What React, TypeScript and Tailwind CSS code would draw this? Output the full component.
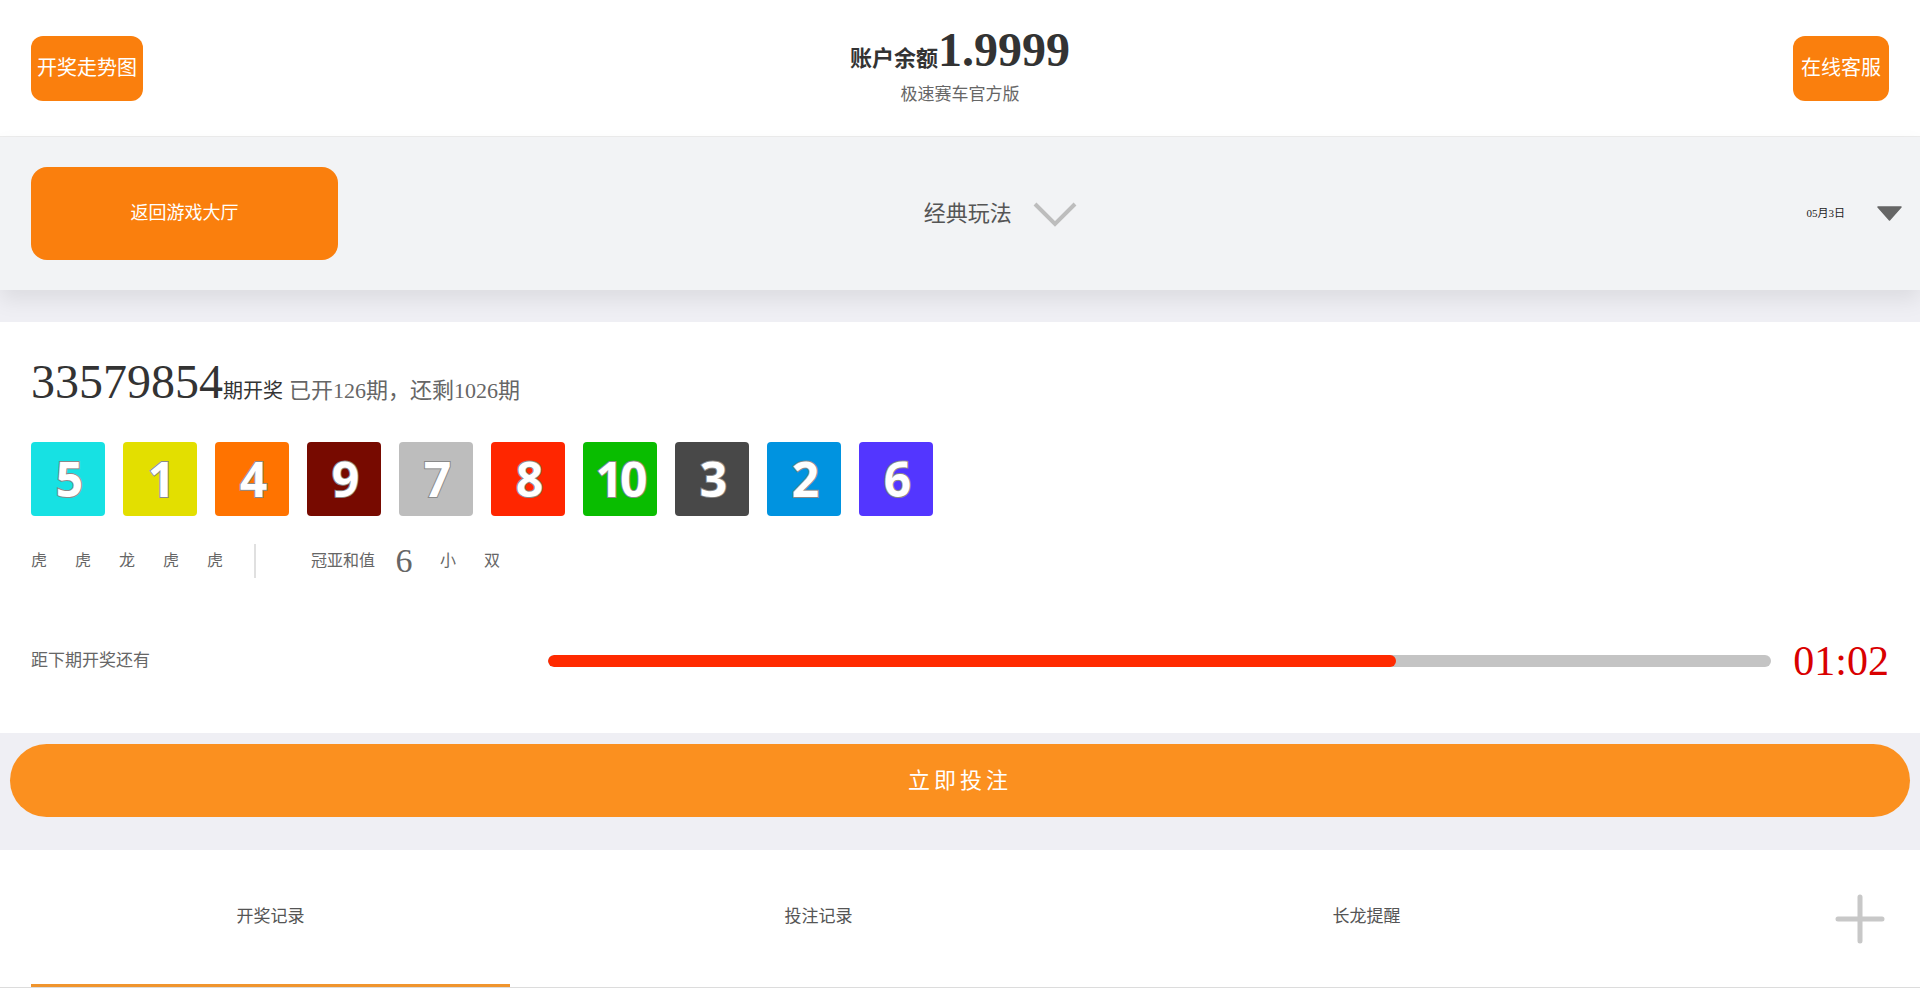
import clsx from 'clsx'

const balls = [
  { n: 5, bg: 'bg-[#17e1e3]' },
  { n: 1, bg: 'bg-[#e3df00]' },
  { n: 4, bg: 'bg-[#ff7300]' },
  { n: 9, bg: 'bg-[#770a00]' },
  { n: 7, bg: 'bg-[#bdbdbd]' },
  { n: 8, bg: 'bg-[#ff2600]' },
  { n: 10, bg: 'bg-[#09bd00]' },
  { n: 3, bg: 'bg-[#484848]' },
  { n: 2, bg: 'bg-[#0093e0]' },
  { n: 6, bg: 'bg-[#5336ff]' },
]

const dragonTiger = ['虎', '虎', '龙', '虎', '虎']
const tabs = ['开奖记录', '投注记录', '长龙提醒']

export default function App() {
  return (
    <div className="min-h-[993px] bg-[#efeff4] font-['Liberation_Serif','Noto_Sans_CJK_SC',serif]">
      {/* top bar */}
      <header className="h-[137px] bg-white border-b border-[#ececec] flex items-center justify-between px-[31px]">
        <div className="w-[112px]">
          <button className="w-[112px] h-[65px] rounded-[12px] bg-[#fa7f0d] text-white text-[20px]">
            开奖走势图
          </button>
        </div>
        <div className="flex flex-col items-center">
          <div className="h-[54px] text-[48px] leading-[54px] font-bold text-[#333] whitespace-nowrap">
            <span className="text-[22px] leading-none">账户余额</span>1.9999
          </div>
          <div className="h-[36px] text-[17px] leading-[36px] text-[#666]">极速赛车官方版</div>
        </div>
        <div className="w-[112px] flex justify-end">
          <button className="w-[96px] h-[65px] rounded-[12px] bg-[#fa7f0d] text-white text-[20px]">
            在线客服
          </button>
        </div>
      </header>

      {/* game switch */}
      <section className="relative z-10 h-[153px] bg-[#f2f3f5] shadow-[0_10px_20px_rgba(0,0,0,0.08)] flex items-center pl-[31px] pr-[18px]">
        <button className="w-[307px] h-[93px] rounded-[16px] bg-[#fa7f0d] text-white text-[18px]">
          返回游戏大厅
        </button>
        <div className="flex-1 flex items-center justify-center gap-[21px] pr-[144px]">
          <span className="text-[22px] text-[#555]">经典玩法</span>
          <svg width="44" height="26" viewBox="0 0 44 26" fill="none">
            <polyline points="2,3 22,23 42,3" stroke="#bdbdbd" strokeWidth="4" />
          </svg>
        </div>
        <div className="flex items-center gap-[32px]">
          <span className="text-[11px] text-[#222]">05月3日</span>
          <svg width="25" height="15" viewBox="0 0 25 15">
            <path d="M1 1 H24 L12.5 14 Z" fill="#666" stroke="#666" strokeLinejoin="round" strokeWidth="1.5" />
          </svg>
        </div>
      </section>

      {/* last draw */}
      <section className="mt-[32px] bg-white px-[31px] pt-[36px] pb-[52px]">
        <div className="h-[48px] leading-[48px] text-[#333] whitespace-nowrap">
          <span className="text-[48px]">33579854</span>
          <span className="text-[20px] leading-none">期开奖</span>
          <span className="ml-[6px] text-[22px] leading-none text-[#666]">已开126期，还剩1026期</span>
        </div>

        <div className="mt-[36px] flex gap-[18px]">
          {balls.map((b) => (
            <div
              key={b.n}
              className={clsx(
                'w-[74px] h-[74px] rounded-[4px] flex items-center justify-center text-white font-bold text-[48px] tracking-[-3px] leading-none',
                "font-['Open_Sans',sans-serif] [-webkit-text-stroke:2px_#8a8a8a] [paint-order:stroke_fill]",
                b.bg
              )}
            >
              {b.n}
            </div>
          ))}
        </div>

        <div className="mt-[28px] flex items-center h-[34px] text-[#666]">
          {dragonTiger.map((t, i) => (
            <span key={i} className="w-[44px] text-[16px]">
              {t}
            </span>
          ))}
          <span className="ml-[3px] w-[2px] h-[34px] bg-[#e0e0e0]" />
          <span className="ml-[55px] text-[16px]">冠亚和值</span>
          <span className="ml-[7px] w-[44px] text-center text-[34px] leading-none">6</span>
          <span className="w-[44px] text-center text-[16px]">小</span>
          <span className="w-[44px] text-center text-[16px]">双</span>
        </div>

        <div className="mt-[63px] flex items-center h-[40px]">
          <span className="w-[517px] text-[17px] text-[#666]">距下期开奖还有</span>
          <div className="flex-1 h-[12px] rounded-full bg-[#c4c4c4] overflow-hidden">
            <div className="h-full w-[69.3%] rounded-full bg-[#ff2a00]" />
          </div>
          <span className="ml-[22px] text-[42px] leading-none text-[#d90000]">01:02</span>
        </div>
      </section>

      {/* bet */}
      <div className="px-[10px] pt-[11px] pb-[33px]">
        <button className="w-full h-[73px] rounded-full bg-[#fb901f] text-white text-[22px] tracking-[4px]">
          立即投注
        </button>
      </div>

      {/* tabs */}
      <div className="bg-white pb-[5px]">
        <nav className="flex items-end gap-[69px] pl-[31px] pr-[35px] border-b border-[#dcdcdc]">
          {tabs.map((t, i) => (
            <div
              key={t}
              className={clsx(
                'w-[479px] h-[137px] flex items-center justify-center text-[17px] text-[#555] border-b-[3px]',
                i === 0 ? 'border-[#f0952e]' : 'border-transparent'
              )}
            >
              {t}
            </div>
          ))}
          <div className="ml-auto self-center">
            <svg width="50" height="50" viewBox="0 0 50 50">
              <path d="M25 3 V47 M3 25 H47" stroke="#c8c8c8" strokeWidth="5" strokeLinecap="round" />
            </svg>
          </div>
        </nav>
      </div>
    </div>
  )
}
